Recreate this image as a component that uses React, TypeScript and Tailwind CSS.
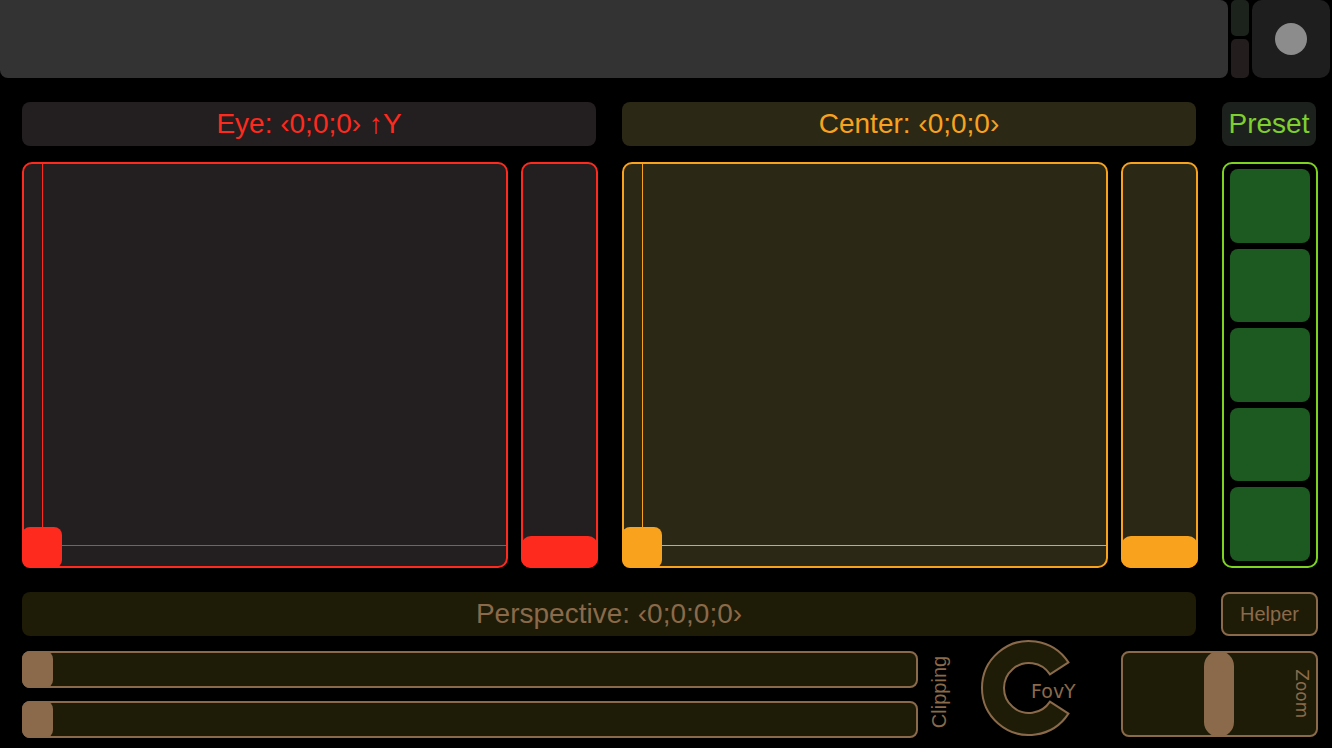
import React from "react";

const sans = "font-['Liberation_Sans',Arial,sans-serif]";
const dv = "font-['DejaVu_Sans',Verdana,sans-serif]";

function XYPad({ color, bg }: { color: string; bg: string }) {
  return (
    <div
      className={`relative w-[486px] shrink-0 h-full rounded-[10px] border-2 ${bg}`}
      style={{ borderColor: color }}
    >
      <div className="absolute left-[18px] top-0 bottom-0 w-[1px]" style={{ backgroundColor: color }} />
      <div className="absolute left-0 right-0 bottom-[20px] h-[1px]" style={{ backgroundColor: color }} />
      <div
        className="absolute left-[-2px] bottom-[-2px] w-[40px] h-[41px] rounded-[8px]"
        style={{ backgroundColor: color }}
      />
    </div>
  );
}

function VSlider({ color, bg }: { color: string; bg: string }) {
  return (
    <div
      className={`relative w-[77px] shrink-0 h-full rounded-[10px] border-2 ${bg}`}
      style={{ borderColor: color }}
    >
      <div
        className="absolute left-[-2px] right-[-2px] bottom-[-2px] h-[32px] rounded-[10px]"
        style={{ backgroundColor: color }}
      />
    </div>
  );
}

function HSlider() {
  return (
    <div className="relative h-[37px] rounded-[8px] border-2 border-[#8a6a4b] bg-[#1e1c06]">
      <div className="absolute left-[-2px] top-[-2px] bottom-[-2px] w-[31px] rounded-[8px] bg-[#8a6a4b]" />
    </div>
  );
}

function FovKnob() {
  // C shaped arc, gap opening to the right
  const cx = 49, cy = 49, R = 47, r = 25;
  const a = (33 * Math.PI) / 180;
  const ox = cx + R * Math.cos(a), oy = R * Math.sin(a);
  const ix = cx + r * Math.cos(a), iy = r * Math.sin(a);
  const d = `M ${ox} ${cy - oy} A ${R} ${R} 0 1 0 ${ox} ${cy + oy} L ${ix} ${cy + iy} A ${r} ${r} 0 1 1 ${ix} ${cy - iy} Z`;
  return (
    <div className="relative w-[100px] h-[100px] shrink-0">
      <svg width="100" height="100" viewBox="0 0 100 100">
        <path d={d} fill="#1e1c06" stroke="#8a6a4b" strokeWidth="2" />
      </svg>
      <span className={`absolute left-[51px] top-[38px] text-[19px] text-[#8a6a4b] ${dv}`}>FovY</span>
    </div>
  );
}

export default function App() {
  return (
    <div className={`w-[1332px] h-[748px] bg-black overflow-hidden ${sans}`}>
      {/* top bar */}
      <div className="flex h-[78px] gap-[3px]">
        <div className="w-[1228px] shrink-0 h-full rounded-b-[8px] rounded-tr-[8px] bg-[#333333]" />
        <div className="flex flex-col gap-[3px] w-[18px] shrink-0">
          <div className="h-[36px] rounded-[5px] bg-[#1c231c]" />
          <div className="flex-1 rounded-[5px] bg-[#231d1d]" />
        </div>
        <div className="w-[78px] shrink-0 h-full rounded-[10px] bg-[#1e1e1e] flex items-center justify-center">
          <div className="w-[32px] h-[32px] rounded-full bg-[#8c8c8c]" />
        </div>
      </div>

      <div className="pl-[22px]">
        {/* label row */}
        <div className="flex gap-[26px] mt-[24px] h-[44px]">
          <div className="w-[574px] shrink-0 rounded-[8px] bg-[#231f20] flex items-center justify-center text-[28px] text-[#ff2a1e]">
            Eye: ‹0;0;0› ↑Y
          </div>
          <div className="w-[574px] shrink-0 rounded-[8px] bg-[#2b2915] flex items-center justify-center text-[28px] text-[#f9a21e]">
            Center: ‹0;0;0›
          </div>
          <div className="w-[94px] shrink-0 rounded-[8px] bg-[#1d211d] flex items-center justify-center text-[28px] text-[#7ed02f]">
            Preset
          </div>
        </div>

        {/* pads row */}
        <div className="flex mt-[16px] h-[406px]">
          <div className="flex gap-[13px] w-[576px] shrink-0">
            <XYPad color="#ff2a1e" bg="bg-[#231f20]" />
            <VSlider color="#ff2a1e" bg="bg-[#231f20]" />
          </div>
          <div className="flex gap-[13px] w-[576px] shrink-0 ml-[24px]">
            <XYPad color="#f9a21e" bg="bg-[#2b2915]" />
            <VSlider color="#f9a21e" bg="bg-[#2b2915]" />
          </div>
          <div className="ml-[24px] w-[96px] shrink-0 rounded-[10px] border-2 border-[#7ed321] flex flex-col gap-[6px] px-[6px] py-[5px]">
            {[0, 1, 2, 3, 4].map((i) => (
              <div key={i} className="flex-1 rounded-[8px] bg-[#1d5a22]" />
            ))}
          </div>
        </div>

        {/* perspective row */}
        <div className="flex mt-[24px] h-[44px]">
          <div className="w-[1174px] shrink-0 rounded-[8px] bg-[#1e1c06] flex items-center justify-center text-[28px] text-[#8a6a4b]">
            Perspective: ‹0;0;0;0›
          </div>
          <div className="ml-[25px] w-[97px] shrink-0 rounded-[8px] border-2 border-[#8a6a4b] bg-[#1e1c06] flex items-center justify-center text-[20px] text-[#8a6a4b]">
            Helper
          </div>
        </div>

        {/* bottom controls */}
        <div className="flex mt-[15px] h-[88px]">
          <div className="w-[896px] shrink-0 flex flex-col gap-[13px]">
            <HSlider />
            <HSlider />
          </div>
          <div className="w-[42px] shrink-0 flex items-center justify-center pb-[6px]">
            <span className="-rotate-90 whitespace-nowrap text-[20px] text-[#8a6a4b]">Clipping</span>
          </div>
          <div className="mt-[-12px] ml-[20px]">
            <FovKnob />
          </div>
          <div className="ml-[41px] w-[197px] shrink-0 h-[86px] relative rounded-[8px] border-2 border-[#8a6a4b] bg-[#1e1c06]">
            <div className="absolute left-[81px] top-[-2px] bottom-[-2px] w-[30px] rounded-full bg-[#8a6a4b]" />
            <div className="absolute right-[2px] top-0 bottom-0 w-[26px] flex items-center justify-center">
              <span className={`rotate-90 whitespace-nowrap text-[17px] text-[#8a6a4b] ${dv}`}>Zoom</span>
            </div>
          </div>
        </div>
      </div>
    </div>
  );
}
